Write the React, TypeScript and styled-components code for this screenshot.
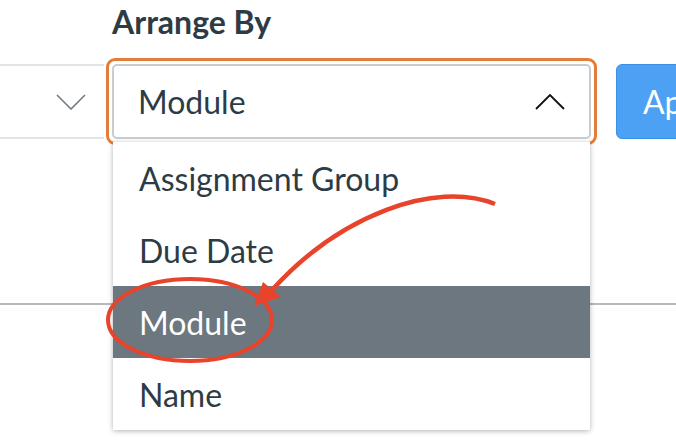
import React from "react";
import styled, { createGlobalStyle } from "styled-components";

const Global = createGlobalStyle`
  html, body { margin: 0; padding: 0; background: #ffffff; }
  body { font-family: Lato, "Open Sans", "Liberation Sans", sans-serif; }
`;

const Page = styled.div`
  position: relative;
  width: 676px;
  height: 440px;
  overflow: hidden;
  background: #fff;
  font-family: Lato, "Liberation Sans", sans-serif;
  color: #2d3b45;
`;

const Label = styled.div`
  padding: 4px 0 0 112px;
  font-size: 32px;
  line-height: 36px;
  font-weight: 700;
  color: #2d3b45;
`;

const Row = styled.div`
  display: flex;
  align-items: flex-start;
  margin-top: 18px;
`;

const LeftSelect = styled.div`
  box-sizing: border-box;
  margin: 6px 0 0 -10px;
  width: 114px;
  height: 75px;
  border-top: 2px solid #e2e5e7;
  border-bottom: 2px solid #e2e5e7;
  display: flex;
  align-items: center;
  justify-content: flex-end;
  padding-right: 18px;
  flex-shrink: 0;
`;

const FocusRing = styled.div`
  margin-left: 2px;
  border: 3px solid #e27d3c;
  border-radius: 9px;
  padding: 3px;
  flex-shrink: 0;
`;

const Select = styled.div`
  box-sizing: border-box;
  width: 479px;
  height: 75px;
  border: 2px solid #c7cdd1;
  border-radius: 5px;
  display: flex;
  align-items: center;
  justify-content: space-between;
  padding: 0 24px 0 24px;
  font-size: 32px;
  color: #2d3b45;
`;

const ApplyButton = styled.div`
  box-sizing: border-box;
  margin: 6px 0 0 19px;
  height: 75px;
  padding: 0 26px;
  border: 1px solid #3d8fe6;
  border-radius: 6px;
  background: #4da1f5;
  color: #fff;
  font-size: 32px;
  display: flex;
  align-items: center;
  flex-shrink: 0;
`;

const Divider = styled.div`
  margin-top: 158px;
  height: 2px;
  background: #b5bbbf;
`;

const Menu = styled.ul`
  position: absolute;
  top: 142px;
  left: 113px;
  width: 477px;
  margin: 0;
  padding: 0;
  list-style: none;
  background: #fff;
  box-shadow: 0 1px 5px rgba(0, 0, 0, 0.3);
`;

const MenuItem = styled.li<{ $active?: boolean }>`
  height: 72px;
  display: flex;
  align-items: center;
  padding-left: 26px;
  font-size: 32px;
  background: ${(p) => (p.$active ? "#6c7780" : "#fff")};
  color: ${(p) => (p.$active ? "#fff" : "#2d3b45")};
`;

const Annotation = styled.svg`
  position: absolute;
  left: 0;
  top: 0;
  pointer-events: none;
`;

const ChevronDown = ({ color }: { color: string }) => (
  <svg width="30" height="16" viewBox="0 0 30 16">
    <polyline points="1,1 15,15 29,1" fill="none" stroke={color} strokeWidth="1.6" />
  </svg>
);

const ChevronUp = () => (
  <svg width="30" height="16" viewBox="0 0 30 16">
    <polyline points="1,15 15,1 29,15" fill="none" stroke="#111" strokeWidth="1.8" />
  </svg>
);

const items = ["Assignment Group", "Due Date", "Module", "Name"];

export default function App() {
  return (
    <Page>
      <Global />
      <Label>Arrange By</Label>
      <Row>
        <LeftSelect>
          <ChevronDown color="#737b82" />
        </LeftSelect>
        <FocusRing>
          <Select>
            <span>Module</span>
            <ChevronUp />
          </Select>
        </FocusRing>
        <ApplyButton>Apply</ApplyButton>
      </Row>
      <Divider />
      <Menu>
        {items.map((it) => (
          <MenuItem key={it} $active={it === "Module"}>
            {it}
          </MenuItem>
        ))}
      </Menu>
      <Annotation width="676" height="440" viewBox="0 0 676 440">
        <ellipse cx="190" cy="320" rx="82" ry="41" fill="none" stroke="#e8432b" strokeWidth="4" />
        <path d="M495,204 C435,180 340,215 272,290" fill="none" stroke="#e8432b" strokeWidth="4.5" />
        <polygon points="254,306 263,282 281,297" fill="#e8432b" />
      </Annotation>
    </Page>
  );
}
